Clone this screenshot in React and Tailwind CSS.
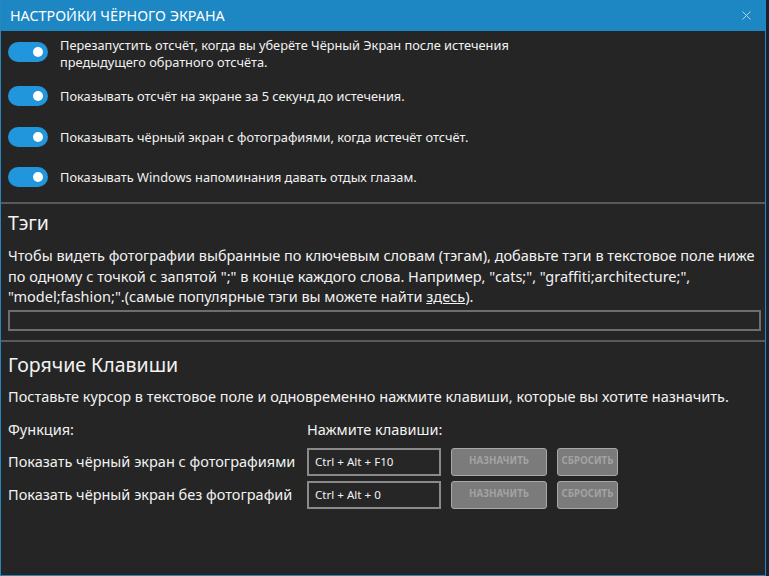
import { X } from 'lucide-react';

const toggles = [
  'Перезапустить отсчёт, когда вы уберёте Чёрный Экран после истечения предыдущего обратного отсчёта.',
  'Показывать отсчёт на экране за 5 секунд до истечения.',
  'Показывать чёрный экран с фотографиями, когда истечёт отсчёт.',
  'Показывать Windows напоминания давать отдых глазам.',
];

const rowGap = ['', 'mt-[10px]', 'mt-[16px]', 'mt-[15px]'];

const hotkeys = [
  { label: 'Показать чёрный экран с фотографиями', keys: 'Ctrl + Alt + F10' },
  { label: 'Показать чёрный экран без фотографий', keys: 'Ctrl + Alt + 0' },
];

function Toggle() {
  return (
    <div className="mt-[5px] flex h-[20px] w-[40px] shrink-0 items-center justify-end rounded-full bg-[#2196dc] pr-[5px]">
      <div className="h-[10px] w-[10px] rounded-full bg-white" />
    </div>
  );
}

function GrayButton({ children, width }) {
  return (
    <button className={`flex h-[28px] ${width} items-center justify-center rounded-[3px] border border-[#a8a8a8] bg-[#7b7b7b] text-[9.7px] font-bold text-[#a3a3a3]`}>
      {children}
    </button>
  );
}

export default function App() {
  return (
    <div
      className="flex h-[576px] w-[769px] bg-[#1a2230] text-[#f2f2f2]"
      style={{ fontFamily: '"Noto Sans", "Open Sans", sans-serif' }}
    >
      <div className="flex w-[766px] flex-col border-x border-b border-[#2a86c0] bg-[#252525]">
        <div className="flex h-[31px] shrink-0 items-center justify-between bg-[#1d87c4] pl-[9px] pr-[11px]">
          <span className="text-[14.3px] text-white">НАСТРОЙКИ ЧЁРНОГО ЭКРАНА</span>
          <X size={15} strokeWidth={1.3} className="text-[#cfe6f5]" />
        </div>

        <div className="flex flex-col px-[7px] pt-[6px] pb-[15px]">
          {toggles.map((t, i) => (
            <div key={i} className={`flex items-start gap-[12px] ${rowGap[i]}`}>
              <Toggle />
              <p className={`max-w-[460px] text-[12.8px] ${i === 0 ? 'leading-[17px]' : 'pt-[5px] leading-[20px]'}`}>{t}</p>
            </div>
          ))}
        </div>

        <div className="h-[2px] shrink-0 bg-[#5a5a5a]" />

        <div className="pl-[7px] pr-[4px] pt-[3px] pb-[9px]">
          <h2 className="text-[19.5px] leading-[31px]">Тэги</h2>
          <p className="mt-[7px] text-[14.5px] leading-[20.5px]">
            Чтобы видеть фотографии выбранные по ключевым словам (тэгам), добавьте тэги в текстовое поле ниже
            по одному с точкой с запятой ";" в конце каждого слова. Например, "cats;", "graffiti;architecture;",
            "model;fashion;".(самые популярные тэги вы можете найти <span className="underline">здесь</span>).
          </p>
          <div className="mt-[3px] h-[21px] border-2 border-[#6e6e6e]" />
        </div>

        <div className="h-[2px] shrink-0 bg-[#5a5a5a]" />

        <div className="px-[7px] pt-[7px]">
          <h2 className="text-[19.5px] leading-[31px]">Горячие Клавиши</h2>
          <p className="mt-[6px] text-[14.5px] leading-[20px]">
            Поставьте курсор в текстовое поле и одновременно нажмите клавиши, которые вы хотите назначить.
          </p>
          <div className="mt-[13px] grid grid-cols-[299px_auto] gap-y-[5px]">
            <div className="mb-[4px] text-[14.5px] leading-[20px]">Функция:</div>
            <div className="mb-[4px] text-[14.5px] leading-[20px]">Нажмите клавиши:</div>
            {hotkeys.map((h) => (
              <div key={h.keys} className="contents">
                <div className="flex h-[28px] items-center text-[14.5px]">{h.label}</div>
                <div className="flex items-center gap-[10px]">
                  <div className="flex h-[28px] w-[134px] items-center border-2 border-[#8a8a8a] bg-[#262626] px-[6px] text-[11.6px]">
                    {h.keys}
                  </div>
                  <GrayButton width="w-[96px]">НАЗНАЧИТЬ</GrayButton>
                  <GrayButton width="w-[61px]">СБРОСИТЬ</GrayButton>
                </div>
              </div>
            ))}
          </div>
        </div>
      </div>
    </div>
  );
}
